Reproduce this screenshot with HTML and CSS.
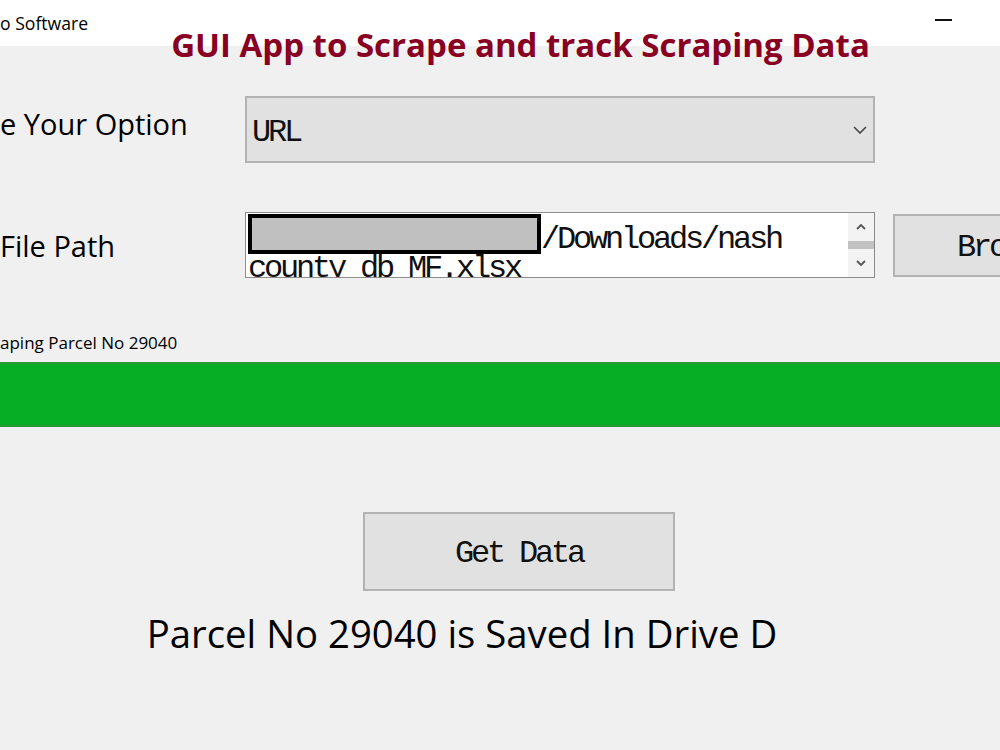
FILE: index.html
```html
<!DOCTYPE html>
<html lang="en">
<head>
    <meta charset="UTF-8">
    <meta name="viewport" content="width=device-width, initial-scale=1.0">
    <title>Scraping App Software</title>
    <link rel="stylesheet" href="styles.css">
</head>
<body>
    <header class="titlebar">
        <span class="window-title">o Software</span>
        <span class="minimize"></span>
    </header>

    <h1 class="banner">GUI App to Scrape and track Scraping Data</h1>

    <main class="form">
        <label class="field-label label-top">e Your Option</label>
        <div class="combo">
            <span class="mono">URL</span>
            <svg class="chevron" viewBox="0 0 14 8" fill="none" stroke="#444" stroke-width="1.6">
                <polyline points="1 1 7 7 13 1"></polyline>
            </svg>
        </div>
        <div></div>

        <label class="field-label label-low">File Path</label>
        <div class="path-box">
            <div class="path-text mono"><span class="redact"></span>/Downloads/nash county db MF.xlsx</div>
            <div class="scroll">
                <div class="scroll-btn">
                    <svg viewBox="0 0 10 6" fill="none" stroke="#555" stroke-width="1.8">
                        <polyline points="1 5 5 1 9 5"></polyline>
                    </svg>
                </div>
                <div class="scroll-thumb"></div>
                <div class="scroll-btn">
                    <svg viewBox="0 0 10 6" fill="none" stroke="#555" stroke-width="1.8">
                        <polyline points="1 1 5 5 9 1"></polyline>
                    </svg>
                </div>
            </div>
        </div>
        <button class="win-btn browse mono">Browse</button>
    </main>

    <p class="status">aping Parcel No 29040</p>
    <div class="progress"></div>

    <div class="actions">
        <button class="win-btn get-data mono">Get Data</button>
    </div>

    <p class="result">Parcel No 29040 is Saved In Drive D</p>
</body>
</html>
```

FILE: styles.css
```css
/* General */
* {
    box-sizing: border-box;
    margin: 0;
    padding: 0;
}

body {
    font-family: 'Open Sans', 'Liberation Sans', sans-serif;
    background-color: #f0f0f0;
    color: #000;
    width: 1000px;
    height: 750px;
    overflow: hidden;
    position: relative;
}

.mono {
    font-family: 'Liberation Mono', 'DejaVu Sans Mono', monospace;
    font-size: 32px;
    letter-spacing: -3.2px;
    color: #111;
}

/* Title bar */
.titlebar {
    height: 46px;
    background-color: #ffffff;
    display: flex;
    justify-content: space-between;
    align-items: center;
    padding-right: 48px;
}

.window-title {
    font-size: 17.6px;
    line-height: 44px;
}

.minimize {
    width: 17px;
    height: 2px;
    background-color: #111;
    margin-top: -6px;
}

/* Overlay heading */
.banner {
    position: absolute;
    top: 28px;
    left: 41px;
    right: 0;
    text-align: center;
    font-size: 33px;
    line-height: 1;
    font-weight: 700;
    color: #880022;
}

/* Form */
.form {
    display: grid;
    grid-template-columns: 227px 630px 224px;
    column-gap: 18px;
    row-gap: 49px;
    padding-top: 50px;
}

.field-label {
    font-size: 29px;
    align-self: start;
}

.label-top {
    padding-top: 8px;
}

.label-low {
    padding-top: 14px;
}

.combo {
    height: 67px;
    background-color: #e1e1e1;
    border: 2px solid #b3b3b3;
    display: flex;
    justify-content: space-between;
    align-items: center;
    padding: 6px 6px 0 5px;
}

.chevron {
    width: 14px;
    height: 8px;
    margin-top: -6px;
}

.path-box {
    height: 66px;
    background-color: #ffffff;
    border: 1px solid #8c8c8c;
    display: flex;
}

.path-text {
    flex: 1;
    overflow: hidden;
    line-height: 29px;
    padding: 12px 0 0 2px;
}

.redact {
    display: inline-block;
    width: 293px;
    height: 40px;
    margin-top: -11px;
    vertical-align: -6px;
    background-color: #c0c0c0;
    border: 4px solid #000;
}

.scroll {
    width: 26px;
    background-color: #f3f3f3;
    display: flex;
    flex-direction: column;
    justify-content: space-between;
}

.scroll-btn {
    height: 28px;
    display: flex;
    align-items: center;
    justify-content: center;
}

.scroll-btn svg {
    width: 10px;
    height: 6px;
}

.scroll-thumb {
    height: 8px;
    background-color: #c2c2c2;
}

/* Buttons */
.win-btn {
    background-color: #e1e1e1;
    border: 2px solid #b3b3b3;
    padding-top: 4px;
}

.browse {
    align-self: center;
    height: 63px;
}

/* Progress */
.status {
    font-size: 17px;
    margin-top: 53px;
}

.progress {
    margin-top: 8px;
    height: 65px;
    background-color: #06ae26;
    border-top: 2px solid #2a9838;
    border-bottom: 2px solid #2a9838;
}

.actions {
    display: flex;
    justify-content: center;
    padding-left: 38px;
    margin-top: 85px;
}

.get-data {
    width: 312px;
    height: 79px;
}

.result {
    font-size: 38.3px;
    text-align: center;
    padding-right: 76px;
    margin-top: 16px;
}
```
